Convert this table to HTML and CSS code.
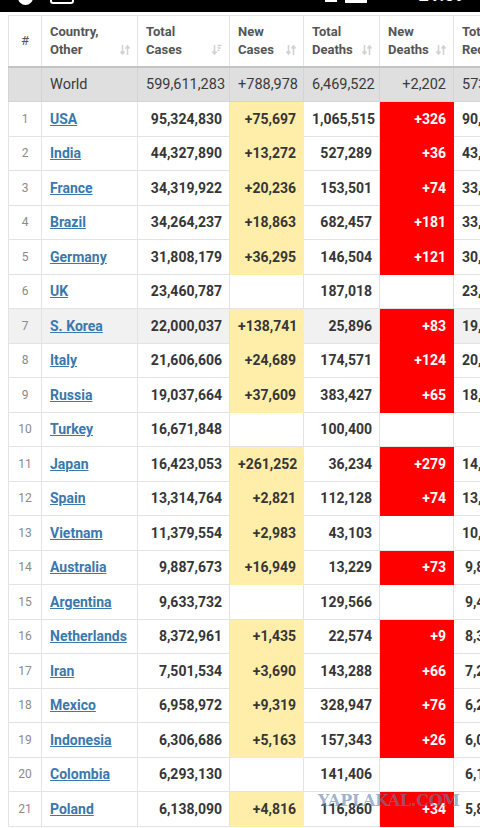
FILE: index.html
```html
<!DOCTYPE html>
<html lang="en">

<head>
    <meta charset="UTF-8">
    <meta name="viewport" content="width=device-width, initial-scale=1.0">
    <title>Coronavirus Cases</title>
    <link rel="stylesheet" href="styles.css">
</head>

<body>
    <div class="status-bar">
        <div class="status-left">
            <span class="sb-shield"></span>
            <span class="sb-box"></span>
        </div>
        <div class="status-right">
            <span class="sb-sim"></span>
            <span class="sb-bat"></span>
            <span class="sb-time">21:09</span>
        </div>
    </div>

    <main class="page">
        <table class="stats">
            <colgroup>
                <col class="c-num">
                <col class="c-country">
                <col class="c-total">
                <col class="c-new">
                <col class="c-deaths">
                <col class="c-newdeaths">
                <col class="c-rec">
            </colgroup>
            <thead>
                <tr>
                    <th class="num">#</th>
                    <th><div class="th-in"><span>Country,<br>Other</span><svg class="sort" viewBox="0 0 10 12"><path d="M2.5 1v9M0.5 7.5l2 2.5 2-2.5M7.5 11V2M5.5 4.5l2-2.5 2 2.5" /></svg></div></th>
                    <th><div class="th-in"><span>Total<br>Cases</span><svg class="sort" viewBox="0 0 10 12"><path d="M2.5 1v9M0.5 7.5l2 2.5 2-2.5M5.5 1.5h4M5.5 4h3M5.5 6.5h2" /></svg></div></th>
                    <th><div class="th-in"><span>New<br>Cases</span><svg class="sort" viewBox="0 0 10 12"><path d="M2.5 1v9M0.5 7.5l2 2.5 2-2.5M7.5 11V2M5.5 4.5l2-2.5 2 2.5" /></svg></div></th>
                    <th><div class="th-in"><span>Total<br>Deaths</span><svg class="sort" viewBox="0 0 10 12"><path d="M2.5 1v9M0.5 7.5l2 2.5 2-2.5M7.5 11V2M5.5 4.5l2-2.5 2 2.5" /></svg></div></th>
                    <th><div class="th-in"><span>New<br>Deaths</span><svg class="sort" viewBox="0 0 10 12"><path d="M2.5 1v9M0.5 7.5l2 2.5 2-2.5M7.5 11V2M5.5 4.5l2-2.5 2 2.5" /></svg></div></th>
                    <th><div class="th-in"><span>Total<br>Recovered</span></div></th>
                </tr>
            </thead>
            <tbody>
                <tr class="world">
                    <td></td>
                    <td class="name">World</td>
                    <td>599,611,283</td>
                    <td>+788,978</td>
                    <td>6,469,522</td>
                    <td>+2,202</td>
                    <td>573,402,156</td>
                </tr>
                <tr><td class="num">1</td><td><a href="#">USA</a></td><td>95,324,830</td><td class="new">+75,697</td><td>1,065,515</td><td class="dead">+326</td><td>90,459,126</td></tr>
                <tr><td class="num">2</td><td><a href="#">India</a></td><td>44,327,890</td><td class="new">+13,272</td><td>527,289</td><td class="dead">+36</td><td>43,745,425</td></tr>
                <tr><td class="num">3</td><td><a href="#">France</a></td><td>34,319,922</td><td class="new">+20,236</td><td>153,501</td><td class="dead">+74</td><td>33,723,107</td></tr>
                <tr><td class="num">4</td><td><a href="#">Brazil</a></td><td>34,264,237</td><td class="new">+18,863</td><td>682,457</td><td class="dead">+181</td><td>33,362,110</td></tr>
                <tr><td class="num">5</td><td><a href="#">Germany</a></td><td>31,808,179</td><td class="new">+36,295</td><td>146,504</td><td class="dead">+121</td><td>30,762,900</td></tr>
                <tr><td class="num">6</td><td><a href="#">UK</a></td><td>23,460,787</td><td></td><td>187,018</td><td></td><td>23,140,154</td></tr>
                <tr class="hl"><td class="num">7</td><td><a href="#">S. Korea</a></td><td>22,000,037</td><td class="new">+138,741</td><td>25,896</td><td class="dead">+83</td><td>19,813,042</td></tr>
                <tr><td class="num">8</td><td><a href="#">Italy</a></td><td>21,606,606</td><td class="new">+24,689</td><td>174,571</td><td class="dead">+124</td><td>20,931,528</td></tr>
                <tr><td class="num">9</td><td><a href="#">Russia</a></td><td>19,037,664</td><td class="new">+37,609</td><td>383,427</td><td class="dead">+65</td><td>18,282,637</td></tr>
                <tr><td class="num">10</td><td><a href="#">Turkey</a></td><td>16,671,848</td><td></td><td>100,400</td><td></td><td></td></tr>
                <tr><td class="num">11</td><td><a href="#">Japan</a></td><td>16,423,053</td><td class="new">+261,252</td><td>36,234</td><td class="dead">+279</td><td>14,582,305</td></tr>
                <tr><td class="num">12</td><td><a href="#">Spain</a></td><td>13,314,764</td><td class="new">+2,821</td><td>112,128</td><td class="dead">+74</td><td>13,045,112</td></tr>
                <tr><td class="num">13</td><td><a href="#">Vietnam</a></td><td>11,379,554</td><td class="new">+2,983</td><td>43,103</td><td></td><td>10,512,718</td></tr>
                <tr><td class="num">14</td><td><a href="#">Australia</a></td><td>9,887,673</td><td class="new">+16,949</td><td>13,229</td><td class="dead">+73</td><td>9,810,425</td></tr>
                <tr><td class="num">15</td><td><a href="#">Argentina</a></td><td>9,633,732</td><td></td><td>129,566</td><td></td><td>9,476,903</td></tr>
                <tr><td class="num">16</td><td><a href="#">Netherlands</a></td><td>8,372,961</td><td class="new">+1,435</td><td>22,574</td><td class="dead">+9</td><td>8,329,012</td></tr>
                <tr><td class="num">17</td><td><a href="#">Iran</a></td><td>7,501,534</td><td class="new">+3,690</td><td>143,288</td><td class="dead">+66</td><td>7,283,617</td></tr>
                <tr><td class="num">18</td><td><a href="#">Mexico</a></td><td>6,958,972</td><td class="new">+9,319</td><td>328,947</td><td class="dead">+76</td><td>6,214,088</td></tr>
                <tr><td class="num">19</td><td><a href="#">Indonesia</a></td><td>6,306,686</td><td class="new">+5,163</td><td>157,343</td><td class="dead">+26</td><td>6,093,260</td></tr>
                <tr><td class="num">20</td><td><a href="#">Colombia</a></td><td>6,293,130</td><td></td><td>141,406</td><td></td><td>6,127,810</td></tr>
                <tr><td class="num">21</td><td><a href="#">Poland</a></td><td>6,138,090</td><td class="new">+4,816</td><td>116,860</td><td class="dead">+34</td><td>5,890,422</td></tr>
            </tbody>
        </table>
        <div class="watermark">YAPLAKAL.COM</div>
    </main>
</body>

</html>
```

FILE: styles.css
```css
* {
    margin: 0;
    padding: 0;
    box-sizing: border-box;
}

html,
body {
    width: 480px;
    height: 828px;
    overflow: hidden;
    background-color: #fff;
}

body {
    font-family: Roboto, 'Noto Sans', sans-serif;
    color: #363636;
}

/* phone status bar, only its lower edge is visible */
.status-bar {
    height: 12px;
    background-color: #000;
    display: flex;
    justify-content: space-between;
    overflow: hidden;
}

.status-left,
.status-right {
    display: flex;
    align-items: flex-start;
}

.sb-shield {
    width: 15px;
    height: 14px;
    margin: -9px 0 0 18px;
    background-color: #fff;
    border-radius: 0 0 8px 8px;
}

.sb-box {
    width: 24px;
    height: 12px;
    margin: -8px 0 0 17px;
    border: 2px solid #fff;
    border-radius: 3px;
}

.sb-sim {
    width: 12px;
    height: 10px;
    margin: -8px 8px 0 0;
    border-bottom: 2px solid #fff;
}

.sb-bat {
    width: 22px;
    height: 10px;
    margin: -7px 52px 0 0;
    background-color: #fff;
}

.sb-time {
    color: #fff;
    font-size: 18px;
    font-weight: 700;
    line-height: 18px;
    margin: -14px 15px 0 0;
}

.page {
    position: relative;
    padding: 3px 0 0 8px;
}

.stats {
    border-collapse: collapse;
    table-layout: fixed;
    width: 527px;
    font-size: 14px;
}

.c-num { width: 33px; }
.c-country { width: 96px; }
.c-total { width: 92px; }
.c-new { width: 74px; }
.c-deaths { width: 76px; }
.c-newdeaths { width: 74px; }
.c-rec { width: 82px; }

.stats th,
.stats td {
    border: 1px solid #e3e3e3;
    white-space: nowrap;
}

.stats th {
    height: 51px;
    padding: 0 7px 0 8px;
    text-align: left;
    vertical-align: middle;
    font-size: 13px;
    line-height: 18px;
    font-weight: 700;
    color: #555;
    border-bottom: 2px solid #c4c4c4;
}

.stats th.num {
    text-align: center;
    font-weight: 400;
    padding: 0;
}

.th-in {
    display: flex;
    justify-content: space-between;
    align-items: flex-end;
}

.sort {
    width: 10px;
    height: 12px;
    margin-bottom: 3px;
    fill: none;
    stroke: #d2d2d2;
    stroke-width: 1.6;
}

.stats td {
    height: 34.5px;
    padding: 0 7px 0 8px;
    text-align: right;
    font-weight: 700;
}

.stats td:nth-child(2) {
    text-align: left;
}

.stats td.num {
    text-align: center;
    font-size: 12px;
    font-weight: 400;
    color: #8a8a8a;
    padding: 0;
}

.stats a {
    color: #3a78ad;
    text-decoration: underline;
}

.world td {
    background-color: #dfdfdf;
    border-color: #d4d4d4;
    font-weight: 400;
    font-size: 14.5px;
    color: #3a3a3a;
    height: 35px;
}

.hl td {
    background-color: #f1f1f1;
}

.stats td.new {
    background-color: #ffeeaa;
    border-color: #ffeeaa;
}

.stats td.dead {
    background-color: #ff0000;
    border-color: #ff0000;
    color: #fff;
}

.watermark {
    position: absolute;
    left: 318px;
    top: 779px;
    font-family: 'DejaVu Serif', serif;
    font-weight: 700;
    font-size: 16px;
    letter-spacing: -0.3px;
    color: rgba(92, 128, 170, 0.6);
}
```
